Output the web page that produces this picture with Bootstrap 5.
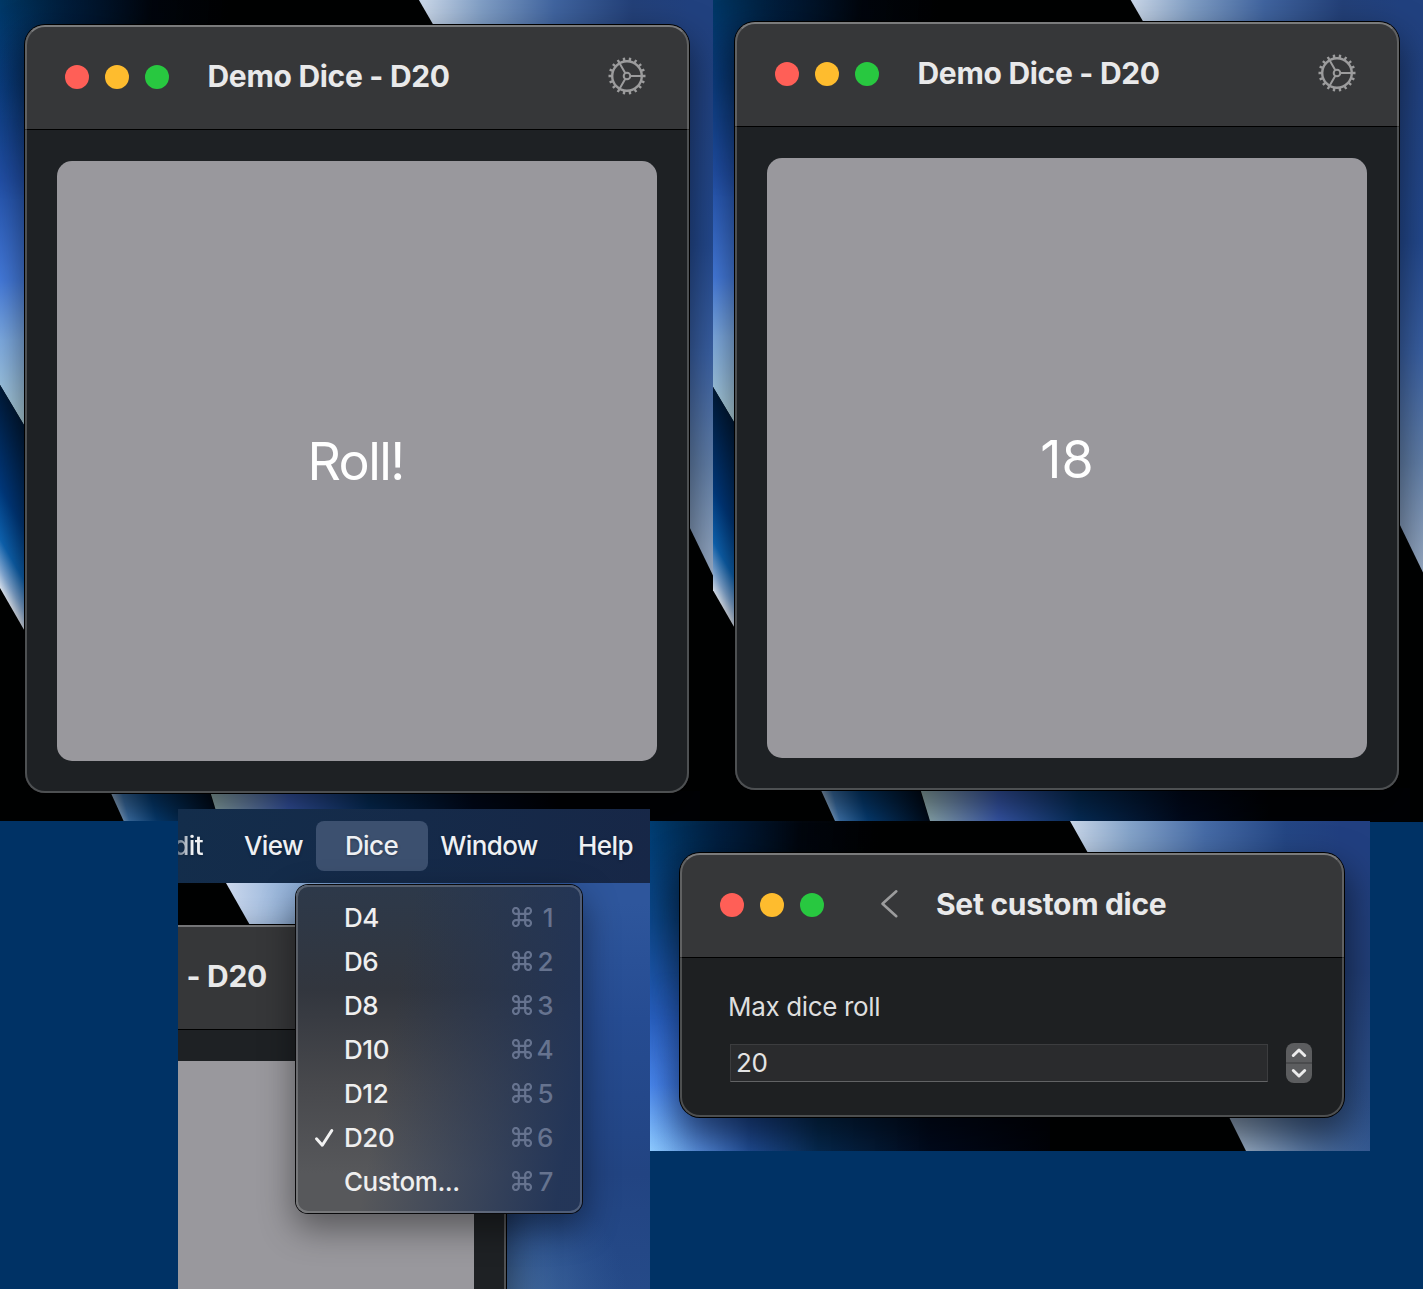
<!DOCTYPE html>
<html lang="en">
<head>
<meta charset="utf-8">
<meta name="viewport" content="width=device-width, initial-scale=1">
<title>Demo Dice</title>
<link rel="stylesheet" href="https://cdn.jsdelivr.net/npm/bootstrap@5.3.0/dist/css/bootstrap.min.css">
<style>
  body { background: #003265; font-family: Inter, "Liberation Sans", sans-serif; color: #e9e9ea; overflow: hidden; }
  .stage { width: 1423px; height: 1289px; }
  .top-row { height: 821px; }
  .desk { background: #010202; }
  .desk-a { width: 713px; height: 821px; padding: 25px 0 0 25px; }
  .desk-b { width: 710px; height: 822px; padding: 22px 0 0 22px; }
  .desk-c { width: 720px; height: 330px; padding: 32px 0 0 30px; }
  .desk-d { width: 472px; height: 480px; margin-left: 178px; margin-top: -12px; }
  .wall { position: absolute; left: 0; top: 0; width: 100%; height: 100%; }

  .app-window { width: 664px; border-radius: 20px; background: #1e2022; box-shadow: 0 0 0 1px #000, 0 18px 36px 4px rgba(0,0,0,.5); }
  .app-window::after { content: ""; position: absolute; inset: 0; border-radius: 20px; border: 2px solid rgba(255,255,255,.21); border-top-color: rgba(255,255,255,.34); pointer-events: none; }
  .titlebar { height: 105px; background: #363739; border-bottom: 1px solid #000; border-radius: 20px 20px 0 0; padding: 0 43.5px 0 40px; }
  .light { width: 24px; height: 24px; border-radius: 50%; }
  .light-r { background: #ff5f57; } .light-y { background: #febc2e; } .light-g { background: #28c840; }
  .win-title { font-size: 30px; font-weight: 650; line-height: 36px; letter-spacing: -.3px; color: #e9e9ea; margin-left: 38.5px; padding-bottom: 3px; }
  .gear { margin-bottom: 3px; }
  .back { width: 20px; height: 30px; margin: 0 -2.5px 2px 56px; }
  .roll-area { padding: 31px 32px 32px; background: #1e2124; border-radius: 0 0 20px 20px; }
  .roll-btn { width: 600px; height: 600px; border-radius: 15px; border: 0; background: #99989d; color: #fff; font-size: 52px; line-height: 60px; font-weight: 420; }
  .roll-btn span { padding-top: 3px; }
  .roll-btn .roll-word { letter-spacing: -1.6px; padding: 2px 3px 0 0; }

  .field-area { height: 159px; padding: 30px 32px 0 48px; }
  .field-label { font-size: 26px; line-height: 38px; letter-spacing: -.35px; color: #dedede; }
  .field-row { margin-top: 17px; }
  .num-field { width: 538px; height: 38px; margin-left: 2px; background: #2a2b2d; border: 1px solid #3c3d3f; border-bottom: 1px solid #626365; font-size: 26px; line-height: 35px; letter-spacing: -.3px; padding-left: 5px; color: #e4e4e4; }
  .stepper { width: 26px; height: 40px; }

  .menu-bar { height: 74px; background: linear-gradient(100deg, #132d4b, #172747); font-size: 26px; font-weight: 500; letter-spacing: -.6px; color: #eef0f3; text-shadow: 0 1px 3px rgba(0,0,0,.3); }
  .menu-bar span { padding-bottom: 2px; }
  .bar-edit { width: 53px; padding-right: 28px; -webkit-mask-image: linear-gradient(to right, rgba(0,0,0,.4), #000 14px); mask-image: linear-gradient(to right, rgba(0,0,0,.4), #000 14px); }
  .bar-view { width: 85px; }
  .menu-bar .bar-dice { width: 112px; height: 50px; border-radius: 8px; padding-right: 1px; background: #3c506f; }
  .bar-window { width: 122px; }
  .bar-help { padding-left: 28px; }
  .under { height: 406px; padding-top: 42px; }
  .under-window { width: 328px; height: 400px; background: #1e2124; border-top: 2px solid #747577; border-right: 2px solid #515254; box-shadow: 0 0 0 1px #000, 0 18px 36px 4px rgba(0,0,0,.5); }
  .under-title { height: 103px; background: #363739; border-bottom: 1px solid #000; font-size: 30px; font-weight: 650; letter-spacing: -.3px; padding: 0 0 4px 8.5px; }
  .under-panel { width: 296px; height: 260px; margin-top: 31px; background: #99989d; }
  .drop { left: 118px; top: 76px; width: 286px; height: 328px; border-radius: 12px; padding-top: 10px; font-size: 26px; font-weight: 500; letter-spacing: -.45px; color: #efefef;
    background: linear-gradient(100deg, rgba(33,52,88,0) 35%, rgba(33,52,88,.95) 92%), linear-gradient(#2d394a, #32363e 32%, #47484c 60%, #57585b 88%);
    box-shadow: 0 0 0 1px #0a0a0c, 0 14px 34px 2px rgba(0,0,0,.42); }
  .drop::after { content: ""; position: absolute; inset: 0; border-radius: 12px; border: 2px solid rgba(255,255,255,.2); pointer-events: none; }
  .drop-item { height: 44px; padding: 0 29px 0 18px; }
  .tick { width: 30px; }
  .keys { color: #66738f; }
  .key-num { width: 21px; }
</style>
</head>
<body>
<svg width="0" height="0" class="position-absolute">
  <defs>
    <linearGradient id="gLeft" gradientUnits="userSpaceOnUse" x1="0" y1="0" x2="0" y2="425">
      <stop offset="0" stop-color="#003866"/><stop offset=".2" stop-color="#0b4086"/><stop offset=".42" stop-color="#2353ae"/><stop offset=".66" stop-color="#467de0"/><stop offset=".8" stop-color="#80aee6"/><stop offset="1" stop-color="#b4d6e0"/>
    </linearGradient>
    <linearGradient id="gDark" gradientUnits="userSpaceOnUse" x1="0" y1="0" x2="230" y2="20">
      <stop offset="0" stop-color="#010204" stop-opacity="0"/><stop offset=".3" stop-color="#00091a" stop-opacity=".6"/><stop offset=".65" stop-color="#010308" stop-opacity=".95"/><stop offset="1" stop-color="#010202"/>
    </linearGradient>
    <linearGradient id="gFade" x1="0" y1="0" x2="0" y2="1">
      <stop offset=".2" stop-color="#fff"/><stop offset="1" stop-color="#000"/>
    </linearGradient>
    <mask id="mFade" maskUnits="userSpaceOnUse" x="-5" y="-5" width="250" height="205"><rect x="-5" y="-5" width="250" height="205" fill="url(#gFade)"/></mask>
    <linearGradient id="gBand" gradientUnits="userSpaceOnUse" x1="0" y1="587" x2="87" y2="537">
      <stop offset="0" stop-color="#dfe9f6"/><stop offset=".09" stop-color="#86aedb"/><stop offset=".24" stop-color="#0e66b6"/><stop offset=".5" stop-color="#003a80"/><stop offset="1" stop-color="#001a38"/>
    </linearGradient>
    <linearGradient id="gRight" gradientUnits="userSpaceOnUse" x1="425" y1="12" x2="713" y2="12">
      <stop offset="0" stop-color="#c6d4e6"/><stop offset=".2" stop-color="#7f9dc4"/><stop offset=".45" stop-color="#40649f"/><stop offset=".72" stop-color="#234078"/><stop offset=".92" stop-color="#21417f"/>
    </linearGradient>
    <linearGradient id="gSide" gradientUnits="userSpaceOnUse" x1="0" y1="25" x2="0" y2="576">
      <stop offset="0" stop-color="#21417f"/><stop offset=".4" stop-color="#244a90"/><stop offset=".6" stop-color="#3b62a6"/><stop offset=".8" stop-color="#6482ac"/><stop offset="1" stop-color="#9cafc8"/>
    </linearGradient>
    <linearGradient id="gFoot1" gradientUnits="userSpaceOnUse" x1="112" y1="800" x2="205" y2="775">
      <stop offset="0" stop-color="#a8c4e0"/><stop offset=".12" stop-color="#3f78b4"/><stop offset=".4" stop-color="#06407a"/><stop offset="1" stop-color="#000c1c"/>
    </linearGradient>
    <linearGradient id="gFoot2" gradientUnits="userSpaceOnUse" x1="212" y1="0" x2="560" y2="0">
      <stop offset="0" stop-color="#9cbcbc"/><stop offset=".1" stop-color="#7290b8"/><stop offset=".22" stop-color="#3a5cb4"/><stop offset=".45" stop-color="#06305f"/><stop offset=".75" stop-color="#010a1e"/><stop offset="1" stop-color="#010205"/>
    </linearGradient>
    <symbol id="wallpaper" overflow="visible">
      <path d="M0-5H240V430H27L0 385Z" fill="url(#gLeft)"/>
      <path d="M-5-5H240V200H-5Z" fill="url(#gDark)" mask="url(#mFade)"/>
      <path d="M-4 378L27 430V635L-4 581Z" fill="url(#gBand)"/>
      <path d="M416-5L434 26H720V-5Z" fill="url(#gRight)"/>
      <path d="M660 25H720V590L688 524Z" fill="url(#gSide)"/>
      <path d="M110 791L125 824H220L209 791Z" fill="url(#gFoot1)"/>
      <path d="M210 791L220 824H700V791Z" fill="url(#gFoot2)"/>
    </symbol>
    <symbol id="gear" viewBox="-19 -19 38 38">
      <g fill="none" stroke="#9c9c9d" stroke-width="2">
        <circle r="14.8" stroke-width="2.4"/>
        <circle r="3.3"/>
        <path d="M3.5 0H14M-1.8-3L-7.3-12.6M-1.8 3L-7.3 12.6"/>
        <path id="teeth" stroke-width="2.4" d="M15 0H18.5M-15 0H-18.5"/>
        <use href="#teeth" transform="rotate(20)"/><use href="#teeth" transform="rotate(40)"/><use href="#teeth" transform="rotate(60)"/><use href="#teeth" transform="rotate(80)"/>
        <use href="#teeth" transform="rotate(100)"/><use href="#teeth" transform="rotate(120)"/><use href="#teeth" transform="rotate(140)"/><use href="#teeth" transform="rotate(160)"/>
      </g>
    </symbol>
    <symbol id="cmd" viewBox="0 0 20 20">
      <path d="M6.8 4V16A2.9 2.9 0 1 1 3.9 13.2H16.1A2.9 2.9 0 1 1 13.2 16V4A2.9 2.9 0 1 1 16.1 6.8H3.9A2.9 2.9 0 1 1 6.8 4Z" fill="none" stroke="#66738f" stroke-width="2.2"/>
    </symbol>
  </defs>
</svg>

<main class="stage">
  <div class="top-row d-flex align-items-start">
    <section class="desk desk-a position-relative overflow-hidden">
      <svg class="wall"><use href="#wallpaper"/></svg>
      <div class="app-window position-relative">
        <header class="titlebar d-flex align-items-center">
          <div class="d-flex gap-3"><span class="light light-r"></span><span class="light light-y"></span><span class="light light-g"></span></div>
          <div class="win-title">Demo Dice - D20</div>
          <svg class="gear ms-auto" width="38" height="38"><use href="#gear"/></svg>
        </header>
        <div class="roll-area"><button class="roll-btn d-flex align-items-center justify-content-center p-0"><span class="roll-word">Roll!</span></button></div>
      </div>
    </section>
    <section class="desk desk-b position-relative overflow-hidden">
      <svg class="wall"><use href="#wallpaper" x="-3" y="-3"/></svg>
      <div class="app-window position-relative">
        <header class="titlebar d-flex align-items-center">
          <div class="d-flex gap-3"><span class="light light-r"></span><span class="light light-y"></span><span class="light light-g"></span></div>
          <div class="win-title">Demo Dice - D20</div>
          <svg class="gear ms-auto" width="38" height="38"><use href="#gear"/></svg>
        </header>
        <div class="roll-area"><button class="roll-btn d-flex align-items-center justify-content-center p-0"><span>18</span></button></div>
      </div>
    </section>
  </div>

  <div class="d-flex align-items-start">
    <section class="desk desk-d position-relative overflow-hidden">
      <nav class="menu-bar d-flex align-items-center">
        <span class="bar-edit d-flex justify-content-end overflow-hidden">Edit</span>
        <span class="bar-view text-center">View</span>
        <span class="bar-dice d-flex align-items-center justify-content-center">Dice</span>
        <span class="bar-window text-center">Window</span>
        <span class="bar-help">Help</span>
      </nav>
      <div class="under position-relative overflow-hidden">
        <svg class="wall">
          <defs>
            <linearGradient id="gU1" x1="0" x2="1" y1="0" y2="0"><stop offset="0" stop-color="#ccd9ee"/><stop offset=".12" stop-color="#9db9dd"/><stop offset=".3" stop-color="#6690c6"/><stop offset=".6" stop-color="#335ca0"/><stop offset=".8" stop-color="#2e569c"/></linearGradient>
            <linearGradient id="gU2" gradientUnits="userSpaceOnUse" x1="0" x2="0" y1="20" y2="406"><stop offset="0" stop-color="#2e569c"/><stop offset=".3" stop-color="#264c92"/><stop offset=".7" stop-color="#224482"/><stop offset="1" stop-color="#254a88"/></linearGradient>
            <radialGradient id="gU3" gradientUnits="userSpaceOnUse" cx="320" cy="420" r="130"><stop offset="0" stop-color="#5f88b0" stop-opacity=".75"/><stop offset="1" stop-color="#3a64a0" stop-opacity="0"/></radialGradient>
          </defs>
          <path d="M48 0L73 44H472V0Z" fill="url(#gU1)"/>
          <path d="M320 20H472V406H320Z" fill="url(#gU2)"/>
          <path d="M320 260H472V406H320Z" fill="url(#gU3)"/>
        </svg>
        <div class="under-window position-relative">
          <div class="under-title d-flex align-items-center">- D20</div>
          <div class="under-panel"></div>
        </div>
      </div>
      <div class="drop position-absolute">
        <div class="drop-item d-flex align-items-center"><span class="tick"></span>D4<span class="keys ms-auto d-flex align-items-center"><svg width="20" height="20"><use href="#cmd"/></svg><span class="key-num text-end">1</span></span></div>
        <div class="drop-item d-flex align-items-center"><span class="tick"></span>D6<span class="keys ms-auto d-flex align-items-center"><svg width="20" height="20"><use href="#cmd"/></svg><span class="key-num text-end">2</span></span></div>
        <div class="drop-item d-flex align-items-center"><span class="tick"></span>D8<span class="keys ms-auto d-flex align-items-center"><svg width="20" height="20"><use href="#cmd"/></svg><span class="key-num text-end">3</span></span></div>
        <div class="drop-item d-flex align-items-center"><span class="tick"></span>D10<span class="keys ms-auto d-flex align-items-center"><svg width="20" height="20"><use href="#cmd"/></svg><span class="key-num text-end">4</span></span></div>
        <div class="drop-item d-flex align-items-center"><span class="tick"></span>D12<span class="keys ms-auto d-flex align-items-center"><svg width="20" height="20"><use href="#cmd"/></svg><span class="key-num text-end">5</span></span></div>
        <div class="drop-item d-flex align-items-center"><span class="tick d-flex"><svg width="21" height="21" viewBox="0 0 21 21"><path d="M2.5 11.8L8.3 18.2L17.8 3.5" fill="none" stroke="#f2f2f2" stroke-width="3" stroke-linecap="round" stroke-linejoin="round"/></svg></span>D20<span class="keys ms-auto d-flex align-items-center"><svg width="20" height="20"><use href="#cmd"/></svg><span class="key-num text-end">6</span></span></div>
        <div class="drop-item d-flex align-items-center"><span class="tick"></span>Custom...<span class="keys ms-auto d-flex align-items-center"><svg width="20" height="20"><use href="#cmd"/></svg><span class="key-num text-end">7</span></span></div>
      </div>
    </section>

    <section class="desk desk-c position-relative overflow-hidden">
      <svg class="wall">
        <defs>
          <linearGradient id="gC1" x1="0" x2="0" y1="0" y2="1"><stop offset="0" stop-color="#003c70"/><stop offset=".3" stop-color="#0c4a90"/><stop offset=".6" stop-color="#2a62c4"/><stop offset=".8" stop-color="#4a88f0"/><stop offset="1" stop-color="#90ccff"/></linearGradient>
          <linearGradient id="gC2" gradientUnits="userSpaceOnUse" x1="0" y1="0" x2="400" y2="0"><stop offset="0" stop-color="#1c50c0" stop-opacity="0"/><stop offset=".12" stop-color="#2050bc" stop-opacity=".5"/><stop offset=".25" stop-color="#123e8c" stop-opacity=".88"/><stop offset=".42" stop-color="#032850" stop-opacity=".98"/><stop offset=".7" stop-color="#010a1e"/><stop offset="1" stop-color="#010208"/></linearGradient>
          <linearGradient id="gC6" x1="0" x2="0" y1="0" y2="1"><stop offset="0" stop-color="#000"/><stop offset=".6" stop-color="#fff"/></linearGradient>
          <mask id="mLow" maskUnits="userSpaceOnUse" x="0" y="150" width="400" height="180"><rect y="150" width="400" height="180" fill="url(#gC6)"/></mask>
          <linearGradient id="gC3" gradientUnits="userSpaceOnUse" x1="420" y1="0" x2="720" y2="0"><stop offset="0" stop-color="#c8d6e8"/><stop offset=".2" stop-color="#84a3c9"/><stop offset=".45" stop-color="#466ba6"/><stop offset=".72" stop-color="#244684"/><stop offset=".9" stop-color="#213f80"/></linearGradient>
          <linearGradient id="gC4" gradientUnits="userSpaceOnUse" x1="0" y1="32" x2="0" y2="330"><stop offset="0" stop-color="#213f80"/><stop offset=".4" stop-color="#223f78"/><stop offset="1" stop-color="#31568f"/></linearGradient>
          <linearGradient id="gC5" gradientUnits="userSpaceOnUse" x1="585" y1="330" x2="710" y2="262"><stop offset="0" stop-color="#a8bcd2"/><stop offset=".4" stop-color="#6080ac"/><stop offset="1" stop-color="#31568f" stop-opacity="0"/></linearGradient>
        </defs>
        <path d="M0 0H240V100H60V250H400V330H0Z" fill="url(#gC1)"/>
        <path d="M0 150H400V330H0Z" fill="url(#gC2)" mask="url(#mLow)"/>
        <path d="M0 0H240V200H0Z" fill="url(#gDark)" mask="url(#mFade)"/>
        <path d="M420 0L438 32H720V0Z" fill="url(#gC3)"/>
        <path d="M664 31H720V330H596L664 200Z" fill="url(#gC4)"/>
        <path d="M577 292L596 330H720V240H577Z" fill="url(#gC5)"/>
      </svg>
      <div class="app-window position-relative">
        <header class="titlebar d-flex align-items-center">
          <div class="d-flex gap-3"><span class="light light-r"></span><span class="light light-y"></span><span class="light light-g"></span></div>
          <svg class="back" viewBox="0 0 20 30"><path d="M16.3 2.3L2.5 14.8L16.3 27.2" fill="none" stroke="#9c9c9d" stroke-width="2.6" stroke-linecap="round" stroke-linejoin="round"/></svg>
          <div class="win-title">Set custom dice</div>
        </header>
        <div class="field-area">
          <div class="field-label">Max dice roll</div>
          <div class="field-row d-flex align-items-center justify-content-between"><div class="num-field">20</div>
            <svg class="stepper" viewBox="0 0 26 40"><rect width="26" height="40" rx="8" fill="#5c5d5f"/><rect y="19" width="26" height="2" fill="#4a4b4d"/><path d="M7.3 12.5L13 7L18.7 12.5M7.3 27.5L13 33L18.7 27.5" fill="none" stroke="#ececec" stroke-width="3" stroke-linecap="round" stroke-linejoin="round"/></svg>
          </div>
        </div>
      </div>
    </section>
  </div>
</main>
<script src="https://cdn.jsdelivr.net/npm/bootstrap@5.3.0/dist/js/bootstrap.bundle.min.js"></script>
</body>
</html>
